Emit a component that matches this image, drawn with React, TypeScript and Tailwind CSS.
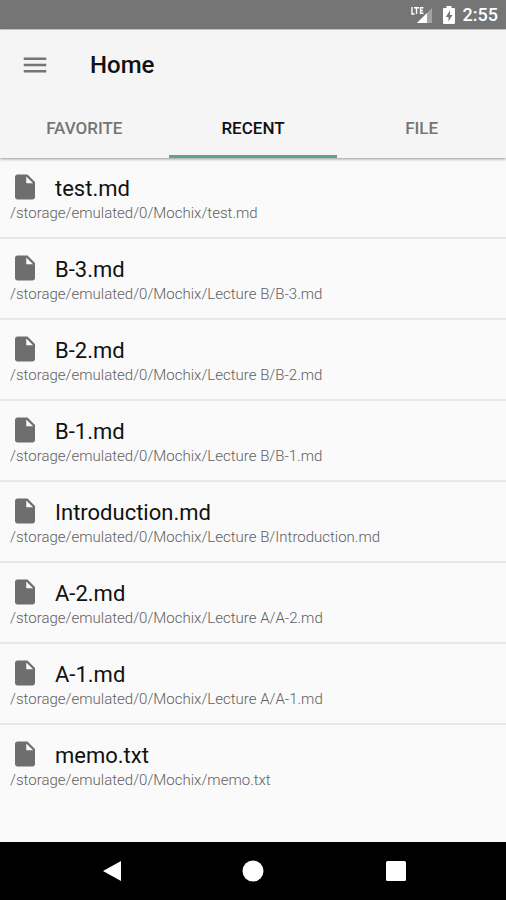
import { useState } from "react";
import { MdInsertDriveFile, MdMenu } from "react-icons/md";

const tabs = ["FAVORITE", "RECENT", "FILE"];

const files = [
  { name: "test.md", path: "/storage/emulated/0/Mochix/test.md" },
  { name: "B-3.md", path: "/storage/emulated/0/Mochix/Lecture B/B-3.md" },
  { name: "B-2.md", path: "/storage/emulated/0/Mochix/Lecture B/B-2.md" },
  { name: "B-1.md", path: "/storage/emulated/0/Mochix/Lecture B/B-1.md" },
  { name: "Introduction.md", path: "/storage/emulated/0/Mochix/Lecture B/Introduction.md" },
  { name: "A-2.md", path: "/storage/emulated/0/Mochix/Lecture A/A-2.md" },
  { name: "A-1.md", path: "/storage/emulated/0/Mochix/Lecture A/A-1.md" },
  { name: "memo.txt", path: "/storage/emulated/0/Mochix/memo.txt" },
];

function StatusBar() {
  return (
    <div className="flex h-[30px] items-center justify-end border-b border-[#cfcfcf] bg-[#757575] pr-2 text-white">
      <svg className="mr-2 h-5 w-6" viewBox="0 0 24 20" aria-label="LTE signal" role="img">
        <path d="M21 3v15H6z" fill="#a3a3a3" />
        <path d="M16 8v10H6z" fill="#fff" />
        <path d="M1 2v7h2.500M3 2.700h5M5.500 2.700v6.300M12.500 2.700h-3v5.600h3M9.500 5.500h2.500" fill="none" stroke="#fff" strokeWidth="1.400" />
      </svg>
      <svg className="mr-2 h-5 w-3" viewBox="0 0 12 20" aria-label="Battery charging" role="img">
        <path d="M3.500 1h5v2H11a1 1 0 0 1 1 1v14a1 1 0 0 1-1 1H1a1 1 0 0 1-1-1V4a1 1 0 0 1 1-1h2.500z" fill="#fff" />
        <path d="M7 5.500 2.800 12H5.500v4.500L9.500 10H7z" fill="#757575" />
      </svg>
      <span className="text-lg leading-5 font-medium">2:55</span>
    </div>
  );
}

export default function App() {
  const [active, setActive] = useState("RECENT");
  return (
    <div className="flex min-h-screen flex-col bg-[#fafafa] font-['Roboto',sans-serif]">
      <StatusBar />
      <header className="relative bg-[#f5f5f5] shadow-[0_1px_3px_rgba(0,0,0,0.4)]">
        <div className="flex h-[70px] items-center pl-5">
          <button type="button" aria-label="Open menu" className="text-[#757575]">
            <MdMenu size={30} />
          </button>
          <h1 className="ml-10 text-2xl font-medium text-[#111]">Home</h1>
        </div>
        <div role="tablist" className="grid h-[58px] grid-cols-3">
          {tabs.map((tab) => (
            <button
              key={tab}
              type="button"
              role="tab"
              aria-selected={active === tab}
              onClick={() => setActive(tab)}
              className={
                active === tab
                  ? "border-b-3 border-[#5fa38f] pt-[3px] text-[17px] font-medium text-[#111]"
                  : "border-b-3 border-transparent pt-[3px] text-[17px] font-medium text-[#757575]"
              }
            >
              {tab}
            </button>
          ))}
        </div>
      </header>
      <main className="flex-1">
        <ul>
          {files.map((file) => (
            <li key={file.path} className="h-[81px] border-b-2 border-[#e8e8e8] px-[10px] pt-[14px] last:border-transparent">
              <div className="flex items-start">
                <MdInsertDriveFile size={30} className="text-[#6e6e6e]" />
                <span className="ml-[15px] pt-px text-[22px] leading-8 text-[#111]">{file.name}</span>
              </div>
              <p className="text-[15px] leading-4 font-light text-[#606060]">{file.path}</p>
            </li>
          ))}
        </ul>
      </main>
      <nav className="grid h-[58px] grid-cols-[1fr_auto_1fr] items-center bg-black text-white">
        <button type="button" aria-label="Back" className="mr-[120px] justify-self-end">
          <svg className="h-[22px] w-5" viewBox="0 0 20 22">
            <path d="M19 1v20L1 11z" fill="currentColor" />
          </svg>
        </button>
        <button type="button" aria-label="Home">
          <svg className="size-[22px]" viewBox="0 0 22 22">
            <circle cx="11" cy="11" r="10.500" fill="currentColor" />
          </svg>
        </button>
        <button type="button" aria-label="Recent apps" className="ml-[121px] justify-self-start">
          <svg className="size-[22px]" viewBox="0 0 22 22">
            <rect x="1" y="1" width="20" height="20" rx="1.500" fill="currentColor" />
          </svg>
        </button>
      </nav>
    </div>
  );
}
